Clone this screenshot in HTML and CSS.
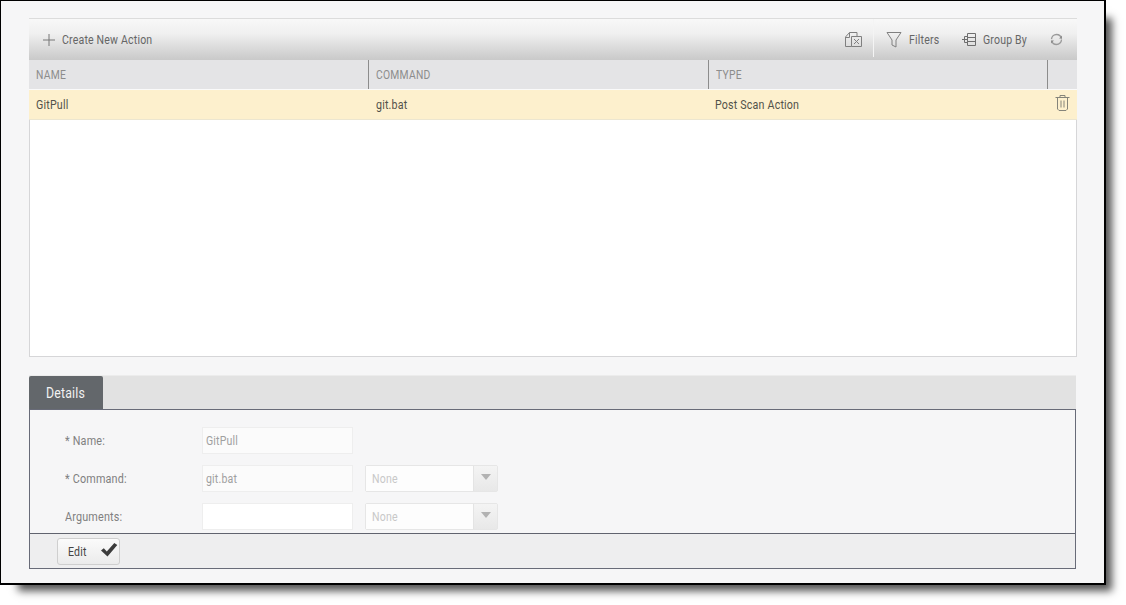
FILE: index.html
```html
<!DOCTYPE html>
<html lang="en">
<head>
<meta charset="utf-8">
<title>Actions</title>
<link rel="stylesheet" href="styles.css">
</head>
<body>
<div class="frame">
  <section class="grid">
    <div class="toolbar">
      <div class="tool tool-create">
        <svg class="ico" width="14" height="14" viewBox="0 0 14 14"><path d="M7 1v12M1 7h12" stroke="#777" fill="none"/></svg>
        <span class="txt txt-create">Create New Action</span>
      </div>
      <div class="tool tool-excel">
        <svg class="ico" width="18" height="16" viewBox="0 0 18 16"><path d="M.5 14.500V5L4.500.5h7.500v3.500M.5 14.500h6M.5 5.500h4v-5M6.500 4.500h10v10h-10zM9 7l5 5M14 7l-5 5" stroke="#808080" fill="none"/></svg>
      </div>
      <div class="tool tool-filter">
        <svg class="ico" width="16" height="18" viewBox="0 0 16 18"><path d="M1 1.500h14l-5 7.500v7l-4-2V9z" stroke="#808080" fill="none"/></svg>
        <span class="txt txt-filter">Filters</span>
      </div>
      <div class="tool tool-group">
        <svg class="ico" width="15" height="15" viewBox="0 0 15 15"><path d="M5.500 1.500h8v12h-8zM5.500 5.500h8M5.500 9.500h8M0 7.500h5.500M2.500 4.500v6M2.500 4.500h3M2.500 10.500h3" stroke="#6e6e6e" fill="none"/></svg>
        <span class="txt txt-group">Group By</span>
      </div>
      <div class="tool tool-refresh">
        <svg class="ico" width="13" height="13" viewBox="0 0 13 13"><circle cx="6.500" cy="6.500" r="5" stroke="#9a9a9a" stroke-width="1.300" fill="none" stroke-dasharray="14 1.700"/><path d="M12 2.500v3h-3zM1 10.500v-3h3z" fill="#8c8c8c"/></svg>
      </div>
    </div>
    <div class="row row-head">
      <div class="cell cell-name"><span class="txt">NAME</span></div>
      <div class="cell cell-command"><span class="txt">COMMAND</span></div>
      <div class="cell cell-type"><span class="txt">TYPE</span></div>
      <div class="cell cell-action"></div>
    </div>
    <div class="row row-data">
      <div class="cell cell-name"><span class="txt">GitPull</span></div>
      <div class="cell cell-command"><span class="txt">git.bat</span></div>
      <div class="cell cell-type"><span class="txt">Post Scan Action</span></div>
      <div class="cell cell-action">
        <svg class="ico" width="15" height="17" viewBox="0 0 15 17"><path d="M.5 3.500h14M5 3.500V1.500h5v2M2.500 3.500v11.500l1.500 1.500h7l1.500-1.500V3.500M6 6.500v7M9 6.500v7" stroke="#85847a" fill="none"/></svg>
      </div>
    </div>
    <div class="grid-body"></div>
  </section>

  <section class="details">
    <div class="tabs"><div class="tab"><span class="txt">Details</span></div></div>
    <div class="panel">
      <form class="form">
        <div class="form-row">
          <span class="label"><span class="txt">* Name:</span></span>
          <div class="input"><span class="txt">GitPull</span></div>
        </div>
        <div class="form-row">
          <span class="label"><span class="txt">* Command:</span></span>
          <div class="input"><span class="txt">git.bat</span></div>
          <div class="select"><div class="select-value"><span class="txt">None</span></div><div class="select-arrow"></div></div>
        </div>
        <div class="form-row">
          <span class="label"><span class="txt">Arguments:</span></span>
          <div class="input input-empty"></div>
          <div class="select"><div class="select-value"><span class="txt">None</span></div><div class="select-arrow"></div></div>
        </div>
      </form>
      <div class="footer">
        <div class="btn">
          <span class="txt">Edit</span>
          <svg class="check" width="18" height="15" viewBox="0 0 18 15"><path d="M1 8.500l2.800-2.300 3 3.300L14.300 1 17.300 3 7.500 14.500z" fill="#3c3c3c"/></svg>
        </div>
      </div>
    </div>
  </section>
</div>
</body>
</html>
```
FILE: styles.css
```css
* { box-sizing: border-box; }
html, body { margin: 0; padding: 0; background: #fff; }
body { width: 1126px; height: 605px; overflow: hidden; font-family: Roboto, "Liberation Sans", sans-serif; font-size: 12px; }
.txt { display: inline-block; transform: scaleX(.88); transform-origin: left center; white-space: nowrap; letter-spacing: .2px; }
.ico { display: block; flex: none; }

.frame {
  width: 1106px; height: 585px;
  padding: 17px 28px 0 28px;
  background: #f6f6f7;
  border: solid #000;
  border-width: 1px 2px 2px 1px;
  box-shadow: 12px 12px 8px -6px #555;
}

.grid { width: 1048px; border-top: 1px solid #dcdcdc; }
.toolbar {
  display: flex; align-items: center; height: 41px; position: relative;
  background: linear-gradient(#f8f8f8, #f0f0f0 35%, #c9c9c9);
  color: #666;
}
.tool { display: flex; align-items: center; flex: none; }
.tool-create { width: 815px; padding-left: 13px; gap: 6px; }
.tool-excel { width: 30px; height: 38px; margin-bottom: 3px; padding: 3px 0 0 1px; border-right: 1px solid #f4f4f4; }
.tool-filter { width: 88px; padding-left: 12px; gap: 7px; }
.tool-group { width: 88px; gap: 6px; }
.tool-refresh { margin-left: 0; }

.row { display: flex; }
.cell { display: flex; align-items: center; flex: none; height: 100%; padding-left: 7px; }
.cell-name { width: 339px; }
.cell-command { width: 340px; }
.cell-type { width: 339px; }
.cell-action { width: 30px; }
.row-head { height: 30px; background: #e4e4e6; color: #8c8c8c; font-size: 12px; border-bottom: 1px solid #fafafa; }
.row-head .cell:not(:first-child) { border-left: 1px solid #8c8c8c; }
.row-head .txt { letter-spacing: .3px; transform: scaleX(.86); }
.row-data { height: 30px; background: #fdf0cd; color: #52524a; border-bottom: 1px solid #ece6d0; }
.row-data .txt { transform: scaleX(.89); }
.row-data .cell-command { padding-left: 8px; }
.row-data .cell-type { padding-left: 7px; }
.row-data .cell-action { padding: 0 0 4px 8px; }
.grid-body { height: 237px; background: #fff; border: 1px solid #d6d6d8; border-top: 0; }

.details { width: 1047px; margin-top: 18px; }
.tabs { height: 34px; background: #e2e2e2; border-top: 1px solid #ececec; }
.tab {
  width: 74px; height: 33px; padding-left: 17px;
  display: flex; align-items: center;
  background: #63676b; color: #f2f2f2; font-size: 14px;
  border-radius: 2px 2px 0 0;
}
.panel { height: 160px; border: 1px solid #686b78; display: flex; flex-direction: column; }
.form { height: 124px; padding-top: 17px; display: flex; flex-direction: column; gap: 11px; overflow: hidden; }
.form-row { display: flex; align-items: center; height: 27px; flex: none; color: #808080; }
.form-row .label .txt { transform: scaleX(.9); }
.label { width: 172px; padding-left: 35px; flex: none; }
.input {
  width: 151px; height: 27px; padding-left: 3px;
  display: flex; align-items: center;
  background: #fbfbfb; border: 1px solid #eeeeee; color: #a0a0a0; flex: none;
}
.input-empty { background: #fff; }
.select { display: flex; width: 133px; height: 27px; margin-left: 12px; border: 1px solid #e6e6e6; border-radius: 2px; flex: none; }
.select-value { width: 107px; padding-left: 6px; display: flex; align-items: center; background: #fdfdfd; color: #c8c8c8; }
.select-arrow {
  flex: 1; display: flex; align-items: center; justify-content: center;
  padding-bottom: 3px;
  background: linear-gradient(#f4f4f4, #e8e8e8); border-left: 1px solid #e4e4e4;
}
.select-arrow::after { content: ""; border: solid transparent; border-width: 6px 5px 0; border-top-color: #b2b2b2; }

.footer { height: 35px; flex: none; background: #eeeeef; border-top: 1px solid #60636e; padding: 4px 0 0 27px; }
.btn {
  width: 63px; height: 27px; padding-left: 10px;
  display: flex; align-items: center; position: relative;
  background: linear-gradient(#fbfbfb, #ebebeb);
  border: 1px solid #cfcfcf; border-radius: 3px; color: #444;
}
.check { position: absolute; right: 1px; top: 3px; }
```
